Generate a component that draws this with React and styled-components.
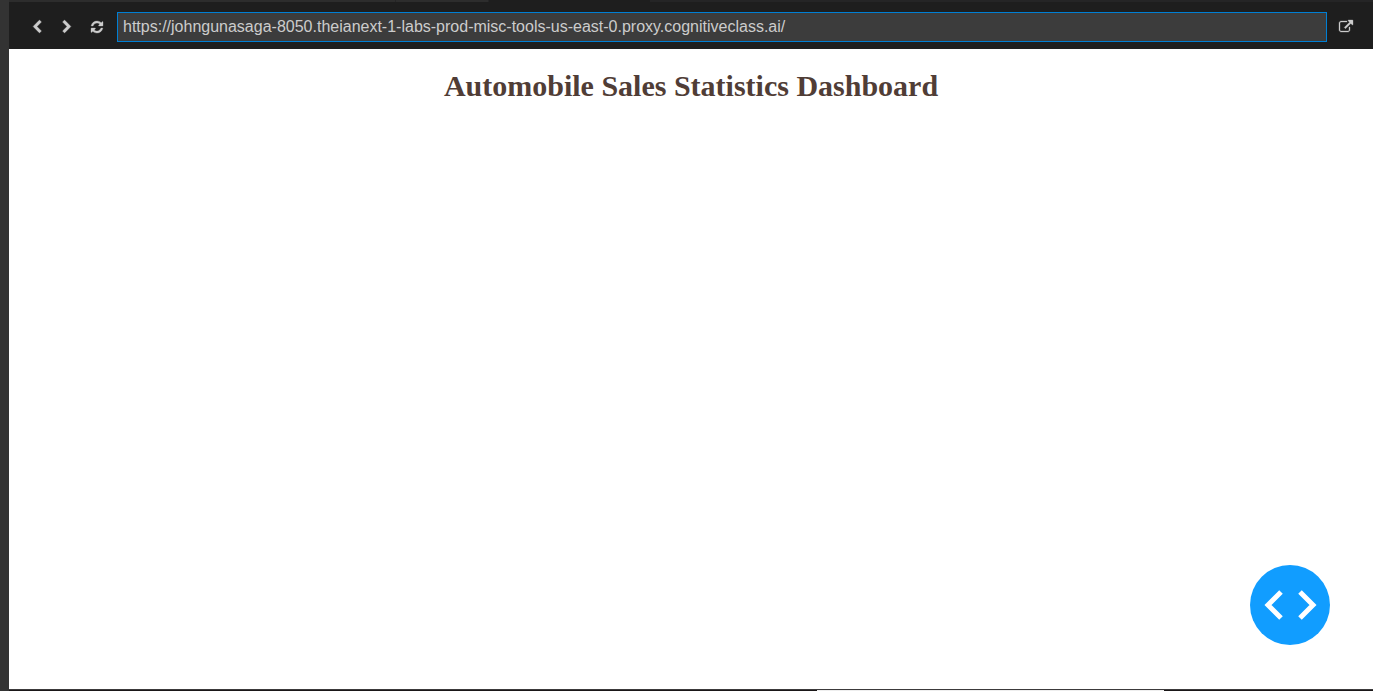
import React from "react";
import styled, { createGlobalStyle } from "styled-components";

const GlobalStyle = createGlobalStyle`
  * { box-sizing: border-box; }
  body { margin: 0; background: #1e1e1e; }
`;

const Shell = styled.div`
  display: flex;
  min-height: 100vh;
  background: #333333;
`;

const Panel = styled.div`
  flex: 1;
  min-width: 0;
  margin-left: 9px;
  display: flex;
  flex-direction: column;
`;

const TabStrip = styled.div`
  display: flex;
  height: 2px;
  background: #252526;
`;

const Tab = styled.div`
  width: ${(p) => p.$width};
  background: ${(p) => (p.$active ? "#1e1e1e" : "#2d2d2d")};
  border-right: 1px solid #252526;
`;

const Toolbar = styled.form`
  display: flex;
  align-items: center;
  height: 47px;
  padding: 3px 17px 0 13px;
  background: #1e1e1e;
`;

const ToolButton = styled.button`
  display: flex;
  align-items: center;
  justify-content: center;
  flex: none;
  width: ${(p) => p.$width || "30px"};
  height: 30px;
  padding: 0;
  border: 0;
  background: transparent;
  color: #cccccc;
  cursor: pointer;
`;

const AddressInput = styled.input`
  flex: 1;
  min-width: 0;
  height: 30px;
  margin: 0 8px 0 5px;
  padding: 0 5px;
  border: 1px solid #007fd4;
  border-radius: 0;
  outline: none;
  background: #3c3c3c;
  color: #cccccc;
  font: 16px "Liberation Sans", Arial, sans-serif;
`;

const Page = styled.main`
  flex: 1;
  background: #ffffff;
`;

const Title = styled.h1`
  margin: 20px 0 0;
  color: #503d36;
  font: bold 30px/34px "Liberation Serif", "Times New Roman", serif;
  text-align: center;
`;

const DebugButton = styled.button`
  position: fixed;
  right: 43px;
  bottom: 46px;
  width: 80px;
  height: 80px;
  padding: 0;
  border: 0;
  border-radius: 50%;
  background: #119dff;
  cursor: pointer;

  svg { display: block; }
`;

const BottomEdge = styled.div`
  display: grid;
  grid-template-columns: 808fr 347fr 209fr;
  height: 2px;
  border-top: 1px solid #3c3a3b;
  background: #1a1718;
`;

const EdgeHighlight = styled.div`
  grid-column: 2;
  background: #eeeeee;
`;

const ICONS = {
  back: "M1427 301l-531 531 531 531q19 19 19 45t-19 45l-166 166q-19 19-45 19t-45-19l-742-742q-19-19-19-45t19-45l742-742q19-19 45-19t45 19l166 166q19 19 19 45t-19 45z",
  forward: "M1363 877l-742 742q-19 19-45 19t-45-19l-166-166q-19-19-19-45t19-45l531-531-531-531q-19-19-19-45t19-45l166-166q19-19 45-19t45 19l742 742q19 19 19 45t-19 45z",
  refresh: "M1639 1056q0 5-1 7-64 268-268 434.5t-478 166.5q-146 0-282.5-55t-243.5-157l-129 129q-19 19-45 19t-45-19-19-45v-448q0-26 19-45t45-19h448q26 0 45 19t19 45-19 45l-137 137q71 66 161 102t187 36q134 0 250-65t186-179q11-17 53-117 8-23 30-23h192q13 0 22.5 9.5t9.5 22.5zm25-800v448q0 26-19 45t-45 19h-448q-26 0-45-19t-19-45 19-45l138-138q-148-137-349-137-134 0-250 65t-186 179q-11 17-53 117-8 23-30 23h-199q-13 0-22.5-9.5t-9.5-22.5v-7q65-268 270-434.5t480-166.5q146 0 284 55.5t245 156.5l130-129q19-19 45-19t45 19 19 45z",
  external: "M1408 928v320q0 119-84.5 203.5t-203.5 84.5h-832q-119 0-203.5-84.5t-84.5-203.5v-832q0-119 84.5-203.5t203.5-84.5h704q14 0 23 9t9 23v64q0 14-9 23t-23 9h-704q-66 0-113 47t-47 113v832q0 66 47 113t113 47h832q66 0 113-47t47-113v-320q0-14 9-23t23-9h64q14 0 23 9t9 23zm384-864v512q0 26-19 45t-45 19-45-19l-176-176-652 652q-10 10-23 10t-23-10l-114-114q-10-10-10-23t10-23l652-652-176-176q-19-19-19-45t19-45 45-19h512q26 0 45 19t19 45z",
};

function Icon({ name }) {
  return (
    <svg
      width="14"
      height="14"
      viewBox="0 0 1792 1792"
      fill="currentColor"
      stroke="currentColor"
      strokeWidth="40"
      overflow="visible"
      aria-hidden="true"
    >
      <path d={ICONS[name]} />
    </svg>
  );
}

export default function App() {
  return (
    <>
      <GlobalStyle />
      <Shell>
        <Panel>
          <TabStrip>
            <Tab $width="387px" />
            <Tab $width="93px" />
            <Tab $width="162px" $active />
          </TabStrip>
          <Toolbar onSubmit={(e) => e.preventDefault()}>
            <ToolButton type="button" aria-label="Back"><Icon name="back" /></ToolButton>
            <ToolButton type="button" aria-label="Forward"><Icon name="forward" /></ToolButton>
            <ToolButton type="button" aria-label="Refresh"><Icon name="refresh" /></ToolButton>
            <AddressInput
              type="text"
              aria-label="Address"
              spellCheck={false}
              defaultValue="https://johngunasaga-8050.theianext-1-labs-prod-misc-tools-us-east-0.proxy.cognitiveclass.ai/"
            />
            <ToolButton type="button" aria-label="Open in a new window" $width="21px"><Icon name="external" /></ToolButton>
          </Toolbar>
          <Page>
            <Title>Automobile Sales Statistics Dashboard</Title>
          </Page>
          <BottomEdge><EdgeHighlight /></BottomEdge>
        </Panel>
      </Shell>
      <DebugButton type="button" aria-label="Toggle developer tools">
        <svg width="80" height="80" viewBox="0 0 80 80" fill="none" stroke="#ffffff" strokeWidth="5" aria-hidden="true">
          <path d="M31 27L18 40l13 13M50 27l13 13-13 13" />
        </svg>
      </DebugButton>
    </>
  );
}
